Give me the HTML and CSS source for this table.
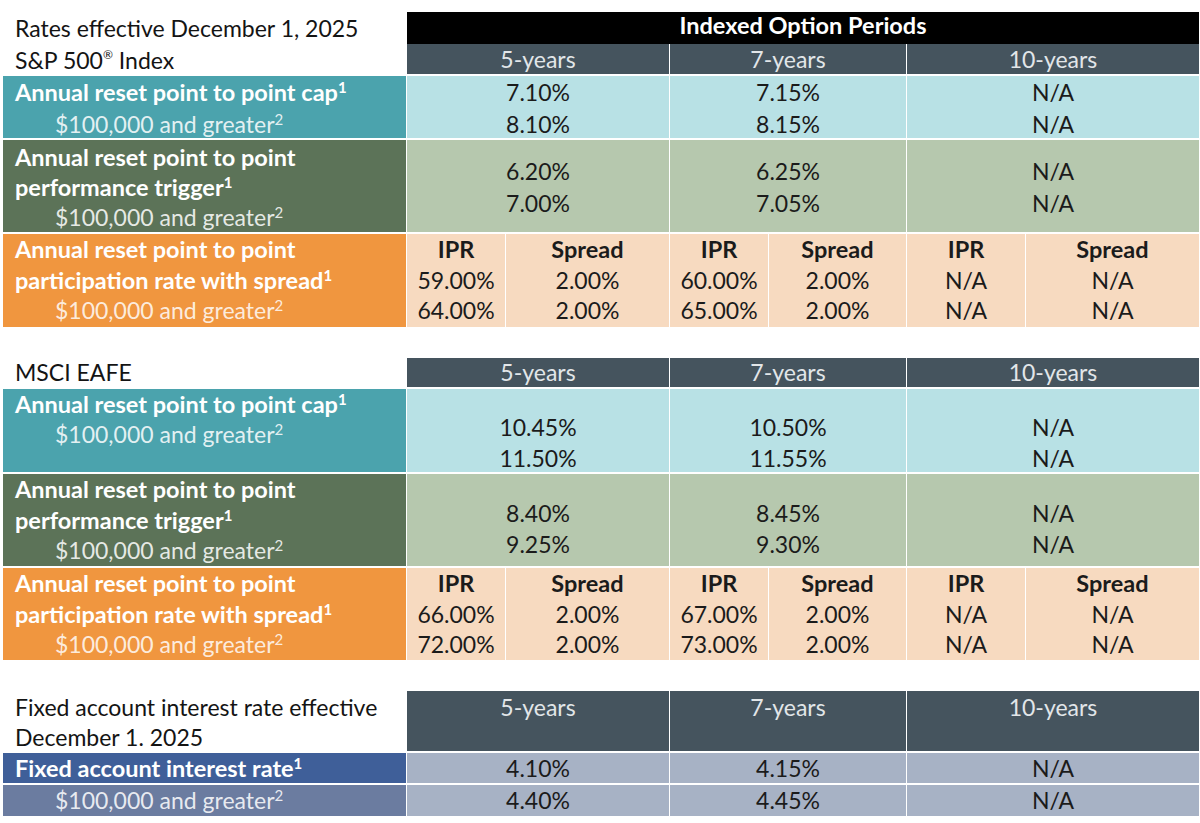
FILE: index.html
```html
<!DOCTYPE html>
<html lang="en">
<head>
<meta charset="utf-8">
<title>Rates effective December 1, 2025</title>
<link rel="stylesheet" href="styles.css">
</head>
<body>
<div class="page">
  <section class="grid s1">
    <div class="title title-sp">Rates effective December 1, 2025<br>S&amp;P 500<sup class="reg">®</sup> Index</div>
    <div class="band">Indexed Option Periods</div>
    <div class="hd c2">5-years</div>
    <div class="hd c2">7-years</div>
    <div class="hd c2">10-years</div>

    <div class="lbl cap cap-l1">Annual reset point to point cap<sup>1</sup><span class="sub">$100,000 and greater<sup>2</sup></span></div>
    <div class="val cap-v c2 cap-v1">7.10%<br>8.10%</div>
    <div class="val cap-v c2 cap-v1">7.15%<br>8.15%</div>
    <div class="val cap-v c2 cap-v1">N/A<br>N/A</div>

    <div class="lbl trig trig-l">Annual reset point to point<br>performance trigger<sup>1</sup><span class="sub">$100,000 and greater<sup>2</sup></span></div>
    <div class="val trig-v c2 trig-v1">6.20%<br>7.00%</div>
    <div class="val trig-v c2 trig-v1">6.25%<br>7.05%</div>
    <div class="val trig-v c2 trig-v1">N/A<br>N/A</div>

    <div class="lbl part part-l">Annual reset point to point<br>participation rate with spread<sup>1</sup><span class="sub">$100,000 and greater<sup>2</sup></span></div>
    <div class="val part-v"><b>IPR</b><br>59.00%<br>64.00%</div>
    <div class="val part-v"><b>Spread</b><br>2.00%<br>2.00%</div>
    <div class="val part-v"><b>IPR</b><br>60.00%<br>65.00%</div>
    <div class="val part-v"><b>Spread</b><br>2.00%<br>2.00%</div>
    <div class="val part-v"><b>IPR</b><br>N/A<br>N/A</div>
    <div class="val part-v"><b>Spread</b><br>N/A<br>N/A</div>
  </section>

  <section class="grid s2">
    <div class="title title-ms">MSCI EAFE</div>
    <div class="hd c2">5-years</div>
    <div class="hd c2">7-years</div>
    <div class="hd c2">10-years</div>

    <div class="lbl cap cap-l2">Annual reset point to point cap<sup>1</sup><span class="sub">$100,000 and greater<sup>2</sup></span></div>
    <div class="val cap-v c2 cap-v2">10.45%<br>11.50%</div>
    <div class="val cap-v c2 cap-v2">10.50%<br>11.55%</div>
    <div class="val cap-v c2 cap-v2">N/A<br>N/A</div>

    <div class="lbl trig trig-l2">Annual reset point to point<br>performance trigger<sup>1</sup><span class="sub">$100,000 and greater<sup>2</sup></span></div>
    <div class="val trig-v c2 trig-v2">8.40%<br>9.25%</div>
    <div class="val trig-v c2 trig-v2">8.45%<br>9.30%</div>
    <div class="val trig-v c2 trig-v2">N/A<br>N/A</div>

    <div class="lbl part part-l">Annual reset point to point<br>participation rate with spread<sup>1</sup><span class="sub">$100,000 and greater<sup>2</sup></span></div>
    <div class="val part-v"><b>IPR</b><br>66.00%<br>72.00%</div>
    <div class="val part-v"><b>Spread</b><br>2.00%<br>2.00%</div>
    <div class="val part-v"><b>IPR</b><br>67.00%<br>73.00%</div>
    <div class="val part-v"><b>Spread</b><br>2.00%<br>2.00%</div>
    <div class="val part-v"><b>IPR</b><br>N/A<br>N/A</div>
    <div class="val part-v"><b>Spread</b><br>N/A<br>N/A</div>
  </section>

  <section class="grid s3">
    <div class="title title-fx">Fixed account interest rate effective<br>December 1. 2025</div>
    <div class="hd hd-tall c2">5-years</div>
    <div class="hd hd-tall c2">7-years</div>
    <div class="hd hd-tall c2">10-years</div>

    <div class="lbl fix1">Fixed account interest rate<sup>1</sup></div>
    <div class="val fix-v c2">4.10%</div>
    <div class="val fix-v c2">4.15%</div>
    <div class="val fix-v c2">N/A</div>

    <div class="lbl fix2"><span class="sub">$100,000 and greater<sup>2</sup></span></div>
    <div class="val fix-v c2">4.40%</div>
    <div class="val fix-v c2">4.45%</div>
    <div class="val fix-v c2">N/A</div>
  </section>
</div>
</body>
</html>
```

FILE: styles.css
```css
html, body {
  margin: 0;
  padding: 0;
  background: #ffffff;
}

body {
  font-family: Lato, "Open Sans", "Liberation Sans", sans-serif;
  font-size: 23px;
  color: #1b1b1b;
}

.page {
  padding: 12px 1px 0 3px;
}

.grid {
  display: grid;
  grid-template-columns: 403px 98px 163px 98px 137px 118px 173px;
  column-gap: 1px;
  background: #ffffff;
}

.s1 { grid-template-rows: 32px 30px 64px 94px 95px; }
.s2 { margin-top: 31px; grid-template-rows: 29px 85px 94px 94px; }
.s3 { margin-top: 31px; grid-template-rows: 60px 32px 33px; }

.c2 { grid-column: span 2; }

sup {
  font-size: 15px;
  line-height: 0;
  vertical-align: 8px;
}

sup.reg {
  font-size: 12px;
  vertical-align: 10px;
}

/* left titles on white */
.title {
  color: #141414;
  padding-left: 12px;
}
.title-sp { grid-row: span 2; line-height: 32px; }
.title-ms { line-height: 29px; }
.title-fx { line-height: 30px; padding-top: 1px; }

/* header bands */
.band {
  grid-column: 2 / 8;
  background: #000000;
  color: #ffffff;
  font-weight: 700;
  font-size: 23.5px;
  text-align: center;
  line-height: 27px;
}

.hd {
  background: #45545e;
  color: #e2e6e9;
  text-align: center;
  line-height: 30px;
}
.s2 .hd { line-height: 29px; }
.hd-tall { padding-top: 1px; }

/* body cells */
.lbl, .val {
  border-top: 2px solid #ffffff;
}

.lbl {
  color: #ffffff;
  font-weight: 700;
  font-size: 23.5px;
  padding-left: 12px;
}

.lbl .sub {
  display: block;
  font-weight: 400;
  font-size: 23px;
  padding-left: 40px;
  color: rgba(255, 255, 255, 0.86);
}

.val {
  text-align: center;
}

.val b { font-weight: 700; font-size: 23.5px; }

.cap { background: #4ba3ad; line-height: 32px; }
.cap-v { background: #b8e1e5; line-height: 32px; }
.cap-l2 { line-height: 30px; }
.cap-v2 { padding-top: 23px; line-height: 31px; }

.trig { background: #5c7358; line-height: 30px; }
.trig-l { padding-top: 2px; }
.trig-l2 { padding-top: 0; line-height: 30.5px; }
.trig-v { background: #b6c8ae; line-height: 32px; }
.trig-v1 { padding-top: 15px; }
.trig-v2 { padding-top: 24px; line-height: 31px; }

.part { background: #f0963f; line-height: 30.5px; padding-top: 0; }
.part .sub { color: rgba(255, 255, 255, 0.84); }
.part-v { background: #f7dac0; line-height: 30.5px; }

.fix1 { background: #3f5f99; line-height: 30px; }
.fix2 { background: #6b7ca0; line-height: 31px; }
.fix-v { background: #a7b2c5; line-height: 30px; }
.fix2 ~ .fix-v { line-height: 31px; }
```
